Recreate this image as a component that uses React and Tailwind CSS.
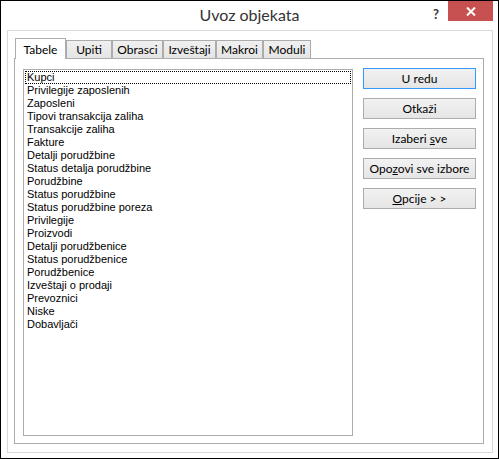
import React, { useState } from "react";

const tables = [
  "Kupci",
  "Privilegije zaposlenih",
  "Zaposleni",
  "Tipovi transakcija zaliha",
  "Transakcije zaliha",
  "Fakture",
  "Detalji porudžbine",
  "Status detalja porudžbine",
  "Porudžbine",
  "Status porudžbine",
  "Status porudžbine poreza",
  "Privilegije",
  "Proizvodi",
  "Detalji porudžbenice",
  "Status porudžbenice",
  "Porudžbenice",
  "Izveštaji o prodaji",
  "Prevoznici",
  "Niske",
  "Dobavljači",
];

const tabs = ["Tabele", "Upiti", "Obrasci", "Izveštaji", "Makroi", "Moduli"];

const tabWidths = {
  Tabele: "w-[51px]",
  Upiti: "w-[46px]",
  Obrasci: "w-[51px]",
  Izveštaji: "w-[53px]",
  Makroi: "w-[47px]",
  Moduli: "w-[48px]",
};

const DialogButton = ({ children, isDefault }) => (
  <button
    className={
      "h-[21px] w-[113px] text-[12px] leading-none text-black bg-gradient-to-b from-[#f2f2f2] to-[#e5e5e5] " +
      (isDefault ? "border border-[#3399ff]" : "border border-[#acacac]")
    }
  >
    {children}
  </button>
);

export default function App() {
  const [active, setActive] = useState("Tabele");

  return (
    <div
      className="w-[499px] h-[459px] border border-black bg-white flex flex-col"
      style={{ fontFamily: '"Lato", "Open Sans", sans-serif' }}
    >
      {/* Title bar */}
      <div className="h-[29px] relative flex items-center justify-center">
        <span className="text-[16px] text-[#333] -mt-[1px]">Uvoz objekata</span>
        <div className="absolute right-[5px] top-0 flex items-start">
          <span className="text-[13px] font-bold text-[#333] mt-[4px] mr-[9px]">?</span>
          <div className="w-[45px] h-[20px] bg-[#c75050] flex items-center justify-center">
            <svg width="10" height="9" viewBox="0 0 10 9">
              <path d="M1 0.5 L9 8.5 M9 0.5 L1 8.5" stroke="white" strokeWidth="2" />
            </svg>
          </div>
        </div>
      </div>

      {/* Outer frame */}
      <div className="flex-1 ml-[6px] mr-[5px] mb-[5px] border border-[#d9d9d9] pt-[7px] pl-[6px] pr-[8px] pb-[8px] flex flex-col">
        {/* Tabs */}
        <div className="flex items-end h-[20px] pl-[1px] relative z-10">
          {tabs.map((t) =>
            t === active ? (
              <div
                key={t}
                onClick={() => setActive(t)}
                className={
                  tabWidths[t] +
                  " h-[21px] -mb-[1px] bg-white border border-[#acacac] border-b-0 flex items-start justify-center pt-[2px] text-[12px] text-black"
                }
              >
                {t}
              </div>
            ) : (
              <div
                key={t}
                onClick={() => setActive(t)}
                className={
                  tabWidths[t] +
                  " h-[18px] bg-gradient-to-b from-[#f0f0f0] to-[#e5e5e5] border border-[#acacac] border-b-0 flex items-center justify-center pt-[1px] text-[12px] text-black"
                }
              >
                {t}
              </div>
            )
          )}
        </div>

        {/* Tab panel */}
        <div className="flex-1 border border-[#acacac] bg-white flex pt-[10px] pl-[8px] pr-[7px] pb-[7px]">
          <div
            className="w-[330px] border border-[#acacac] bg-white pt-[1px] px-[1px]"
            style={{ fontFamily: '"Liberation Sans", Arial, sans-serif' }}
          >
            {tables.map((name, i) => (
              <div
                key={name}
                className={
                  "h-[13px] leading-[13px] text-[11px] text-black pl-[2px] " +
                  (i === 0 ? "outline outline-1 outline-dotted outline-black -outline-offset-1" : "")
                }
              >
                {name}
              </div>
            ))}
          </div>

          <div className="ml-auto flex flex-col gap-[9px] -mt-[1px]">
            <DialogButton isDefault>U redu</DialogButton>
            <DialogButton>Otkaži</DialogButton>
            <DialogButton>
              Izaberi <u>s</u>ve
            </DialogButton>
            <DialogButton>
              Opo<u>z</u>ovi sve izbore
            </DialogButton>
            <DialogButton>
              <u>O</u>pcije &gt; &gt;
            </DialogButton>
          </div>
        </div>
      </div>
    </div>
  );
}
